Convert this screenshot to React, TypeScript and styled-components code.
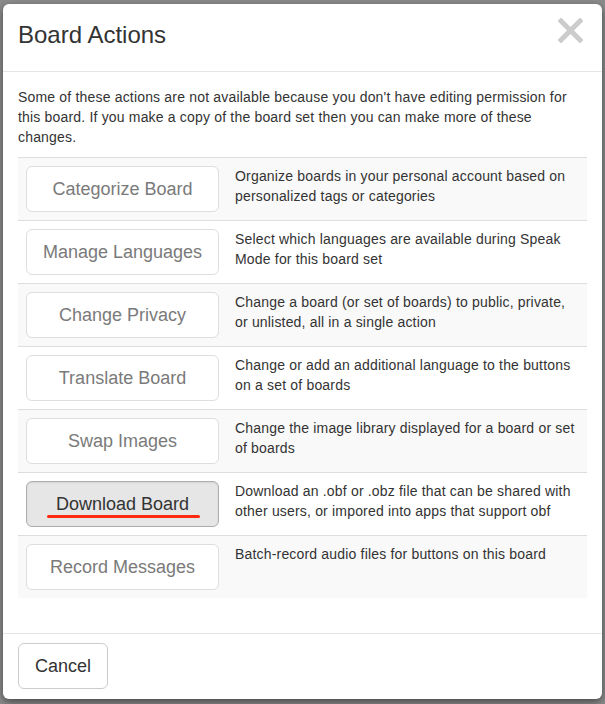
import React from "react";
import styled, { createGlobalStyle } from "styled-components";

const GlobalStyle = createGlobalStyle`
  html, body {
    margin: 0;
    padding: 0;
    background: #8c8c8c;
  }
  * {
    box-sizing: border-box;
  }
`;

const Backdrop = styled.div`
  width: 605px;
  height: 704px;
  padding: 4px 3px 0 3px;
  background: #8c8c8c;
  font-family: "Liberation Sans", Arial, sans-serif;
  color: #333;
  font-size: 14px;
  line-height: 20px;
`;

const Modal = styled.div`
  width: 599px;
  background: #fff;
  border-radius: 6px;
  box-shadow: 0 3px 9px rgba(0, 0, 0, 0.5);
  overflow: hidden;
`;

const Header = styled.div`
  display: flex;
  justify-content: space-between;
  align-items: flex-start;
  padding: 15px;
  border-bottom: 1px solid #e5e5e5;
`;

const Title = styled.h3`
  margin: 0;
  padding-bottom: 6px;
  font-size: 24px;
  font-weight: 400;
  line-height: 31px;
`;

const Close = styled.button`
  border: 0;
  background: none;
  padding: 0;
  margin: -1px 4px 0 0;
  width: 25px;
  height: 25px;
  cursor: pointer;
  svg {
    display: block;
  }
`;

const Body = styled.div`
  padding: 15px;
  letter-spacing: 0.18px;
`;

const Intro = styled.p`
  margin: 0 0 10px;
`;

const Table = styled.div`
  display: flex;
  flex-direction: column;
  margin-bottom: 20px;
  border-top: 1px solid #ddd;
`;

const Row = styled.div<{ $striped: boolean }>`
  display: grid;
  grid-template-columns: 209px 1fr;
  border-bottom: 1px solid #ddd;
  background: ${(p) => (p.$striped ? "#f9f9f9" : "#fff")};
  &:last-child {
    border-bottom: 0;
  }
`;

const Cell = styled.div`
  padding: 8px;
`;

const ActionButton = styled.button<{ $active?: boolean }>`
  position: relative;
  width: 193px;
  height: 46px;
  padding: 0;
  border-radius: 6px;
  font-family: "Liberation Sans", Arial, sans-serif;
  font-size: 18px;
  letter-spacing: 0;
  border: 1px solid ${(p) => (p.$active ? "#adadad" : "#dedede")};
  background: ${(p) => (p.$active ? "#e6e6e6" : "#fff")};
  color: ${(p) => (p.$active ? "#333" : "#7a7a7a")};
  box-shadow: ${(p) => (p.$active ? "inset 0 1px 2px rgba(0,0,0,.08)" : "none")};
  cursor: pointer;
`;

const Underline = styled.span`
  position: absolute;
  left: 20px;
  right: 18px;
  bottom: 8px;
  height: 3px;
  border-radius: 2px;
  background: #ff2a12;
`;

const Footer = styled.div`
  padding: 9px 15px 10px;
  border-top: 1px solid #e5e5e5;
`;

const CancelButton = styled.button`
  width: 90px;
  height: 46px;
  padding: 0;
  border: 1px solid #ccc;
  border-radius: 6px;
  background: #fff;
  color: #333;
  font-family: "Liberation Sans", Arial, sans-serif;
  font-size: 18px;
  cursor: pointer;
`;

const actions = [
  {
    label: "Categorize Board",
    desc: "Organize boards in your personal account based on personalized tags or categories",
  },
  {
    label: "Manage Languages",
    desc: "Select which languages are available during Speak Mode for this board set",
  },
  {
    label: "Change Privacy",
    desc: "Change a board (or set of boards) to public, private, or unlisted, all in a single action",
  },
  {
    label: "Translate Board",
    desc: "Change or add an additional language to the buttons on a set of boards",
  },
  {
    label: "Swap Images",
    desc: "Change the image library displayed for a board or set of boards",
  },
  {
    label: "Download Board",
    desc: "Download an .obf or .obz file that can be shared with other users, or impored into apps that support obf",
    active: true,
  },
  {
    label: "Record Messages",
    desc: "Batch-record audio files for buttons on this board",
  },
];

const App = () => {
  return (
    <>
      <GlobalStyle />
      <Backdrop>
        <Modal>
          <Header>
            <Title>Board Actions</Title>
            <Close aria-label="close">
              <svg width="25" height="25" viewBox="0 0 25 25">
                <path
                  d="M3 3 L22 22 M22 3 L3 22"
                  stroke="#cccccc"
                  strokeWidth="5"
                  strokeLinecap="square"
                />
              </svg>
            </Close>
          </Header>
          <Body>
            <Intro>
              Some of these actions are not available because you don't have
              editing permission for this board. If you make a copy of the board
              set then you can make more of these changes.
            </Intro>
            <Table>
              {actions.map((a, i) => (
                <Row key={a.label} $striped={i % 2 === 0}>
                  <Cell>
                    <ActionButton $active={a.active}>
                      {a.label}
                      {a.active && <Underline />}
                    </ActionButton>
                  </Cell>
                  <Cell>{a.desc}</Cell>
                </Row>
              ))}
            </Table>
          </Body>
          <Footer>
            <CancelButton>Cancel</CancelButton>
          </Footer>
        </Modal>
      </Backdrop>
    </>
  );
};

export default App;
